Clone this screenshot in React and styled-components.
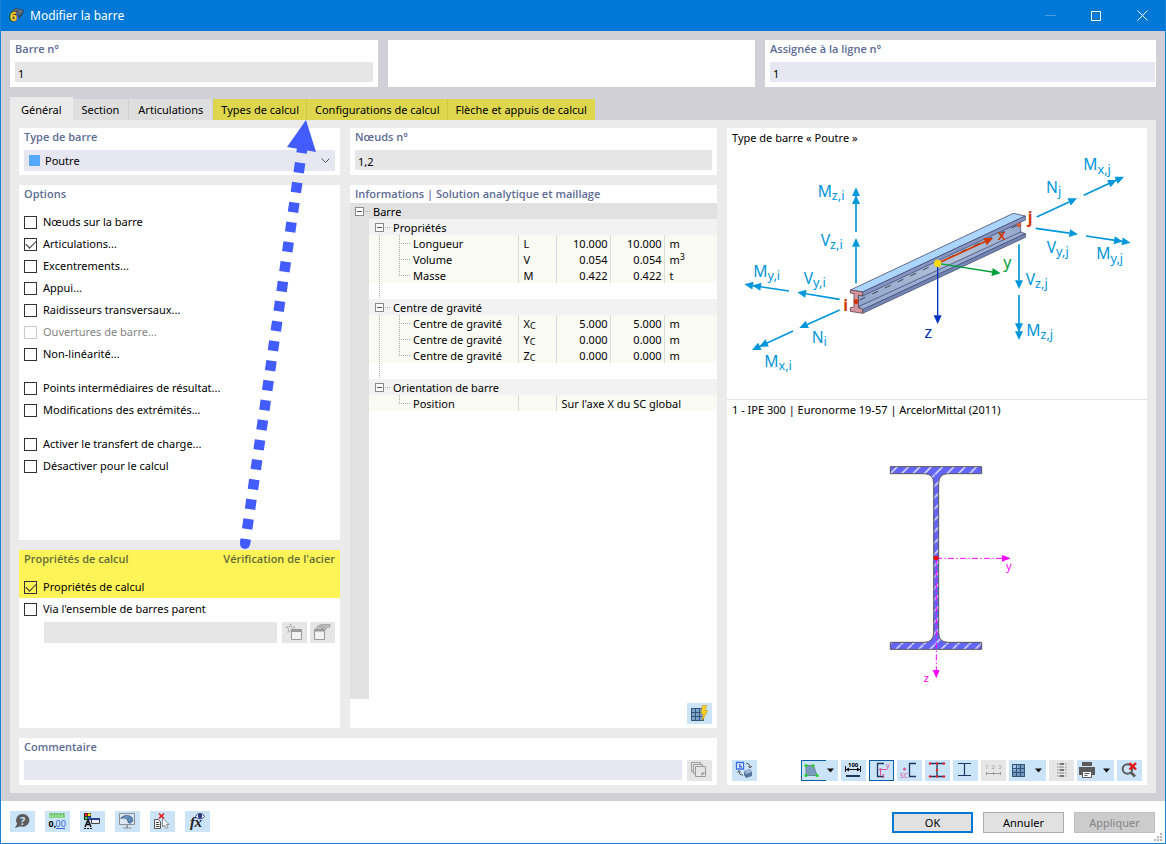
import React from "react";
import styled, {createGlobalStyle, css} from "styled-components";

const GlobalStyle = createGlobalStyle`
  * {
    box-sizing: border-box;
  }
  body {
    margin: 0;
    font-family: "Noto Sans", "Open Sans", sans-serif;
    font-size: 11px;
    line-height: 16px;
    color: #000;
  }
  button, input, select {
    font: inherit;
    color: inherit;
    margin: 0;
    padding: 0;
    border: 0;
    border-radius: 0;
  }
`;

/* ---------- window frame ---------- */

const Window = styled.div`
  min-height: 100vh;
  display: flex;
  flex-direction: column;
  border: 1px solid #1883d7;
  border-top: 0;
  background: #fff;
`;
const TitleBar = styled.header`
  height: 31px;
  display: flex;
  align-items: center;
  background: #0078d7;
  color: #fff;
  h1 {
    flex: 1;
    margin: 0 0 0 5px;
    font-size: 12px;
    font-weight: 400;
  }
  > svg {
    margin-left: 7px;
    overflow: visible;
  }
`;
const WindowButton = styled.button`
  width: 46px;
  height: 31px;
  background: none;
  svg {
    display: block;
    margin: auto;
  }
`;
const Body = styled.main`
  flex: 1;
  display: flex;
  flex-direction: column;
  padding: 9px 9px 8px;
  background: #d1d0d6;
`;

/* ---------- panels and fields ---------- */

const Panel = styled.section`
  display: flex;
  flex-direction: column;
  min-width: 0;
  background: #fff;
  ${(p) => p.$grow && "flex: 1;"}
  ${(p) => p.$padded && "min-height: 47px; padding: 0 5px 4px;"}
`;
const headingStyle = css`
  margin: 0;
  height: 22px;
  font-family: "Open Sans", "Noto Sans", sans-serif;
  font-size: 11px;
  font-weight: 600;
  line-height: 17px;
  color: #5c6b94;
  white-space: nowrap;
`;
const Heading = styled.h2`
  ${headingStyle}
`;
const FieldLabel = styled.label`
  ${headingStyle}
  display: block;
`;
const TextField = styled.input`
  display: block;
  width: 100%;
  min-width: 0;
  height: ${(p) => (p.$tall ? 21 : 20)}px;
  padding: 2px 3px 0;
  background: ${(p) => (p.$editable ? "#e7e7f2" : "#e6e6e6")};
`;
const TopRow = styled.div`
  display: grid;
  grid-template-columns: 368fr 367fr 391fr;
  gap: 10px;
  ${Panel}:last-child {
    padding-right: 1px;
  }
`;
const SelectBox = styled.div`
  height: 21px;
  display: flex;
  align-items: center;
  padding: 0 5px;
  background: #e7e7f2;
  select {
    flex: 1;
    height: 21px;
    margin-left: 5px;
    appearance: none;
    background: none;
  }
`;
const Swatch = styled.span`
  width: 11px;
  height: 11px;
  background: #55aaff;
`;

/* ---------- tabs ---------- */

const TabStrip = styled.nav`
  display: flex;
  align-items: flex-end;
  height: 23px;
  margin-top: 10px;
`;
const Tab = styled.button`
  height: ${(p) => (p.$active ? 23 : 21)}px;
  padding: ${(p) => (p.$active ? "2px 10px 0 11px" : "0 9px")};
  white-space: nowrap;
  border-right: 1px solid #d1d0d6;
  background: #dedede;
  ${(p) => p.$active && "background: #ebebeb; border-color: #ebebeb;"}
  ${(p) => p.$marked && "padding: 0 7px 0 8px; background: #ded74d; border-color: #d0c945;"}
  &:last-child {
    border-color: #ded74d;
  }
`;
const TabPage = styled.div`
  flex: 1;
  position: relative;
  display: grid;
  grid-template-columns: 321fr 367fr 420fr;
  grid-template-rows: 1fr auto;
  gap: 10px;
  padding: 8px 9px;
  background: #ebebeb;
`;
const Column = styled.div`
  display: flex;
  flex-direction: column;
  gap: 10px;
  min-width: 0;
`;
const CommentPanel = styled(Panel)`
  grid-column: 1 / 3;
  grid-row: 2;
`;
const CommentRow = styled.div`
  display: flex;
  gap: 5px;
`;
const PreviewPanel = styled(Panel)`
  grid-column: 3;
  grid-row: 1 / 3;
`;

/* ---------- check boxes ---------- */

const CheckList = styled.div`
  padding: ${(p) => (p.$first ? "4px 0 0" : "12px 0 0")};
`;
const CheckLabel = styled.label`
  display: flex;
  align-items: center;
  gap: 6px;
  height: 22px;
  color: ${(p) => (p.$disabled ? "#838383" : "#000")};
  white-space: nowrap;
`;
const CheckInput = styled.input`
  appearance: none;
  width: 13px;
  height: 13px;
  flex: none;
  display: grid;
  place-items: center;
  border: 1px solid #333;
  background: ${(p) => (p.$plain ? "transparent" : "#fff")};
  &:disabled {
    border-color: #ccc;
  }
  &:checked::before {
    content: "";
    width: 9px;
    height: 5px;
    margin-bottom: 3px;
    border: solid #333;
    border-width: 0 0 1px 1px;
    transform: rotate(-45deg);
  }
`;
const DesignPanel = styled(Panel)`
  min-height: 178px;
`;
const Marked = styled.div`
  height: 48px;
  padding: 0 5px;
  background: #fff457;
  ${Heading} {
    display: flex;
    justify-content: space-between;
    height: 26px;
    color: #5f6d38;
  }
`;
const SetBox = styled.div`
  padding: 0 5px;
`;
const SetRow = styled.div`
  display: flex;
  gap: 3px;
  padding: 2px 0 0 20px;
  ${TextField} {
    margin-right: 2px;
  }
`;

/* ---------- information tree ---------- */

const TreeHeading = styled(Heading)`
  height: 18px;
  padding-left: 5px;
`;
const TreeRoot = styled.div`
  display: flex;
  align-items: center;
  height: 16px;
  padding-left: 5px;
  background: #e1e1e1;
`;
const TreeBody = styled.div`
  flex: 1;
  border-left: 19px solid #e1e1e1;
`;
const Toggle = styled.button`
  width: 9px;
  height: 9px;
  display: grid;
  place-items: center;
  flex: none;
  border: 1px solid #8a8a8a;
  background: #fff;
  &::before {
    content: "";
    width: 5px;
    height: 1px;
    background: #555;
  }
`;
const Dots = styled.span`
  width: 5px;
  height: 1px;
  flex: none;
  margin: 0 3px 0 1px;
  background: repeating-linear-gradient(to right, #aaa 0 1px, transparent 1px 2px);
`;
const Table = styled.table`
  width: 100%;
  table-layout: fixed;
  border-collapse: collapse;
  tr {
    height: 16px;
  }
  td, th {
    height: 16px;
    padding: 0;
    font-weight: 400;
    text-align: left;
    white-space: nowrap;
  }
`;
const Col = styled.col`
  width: ${(p) => p.$width}px;
`;
const GroupRow = styled.tr`
  background: #f2f2f2;
`;
const DataRow = styled.tr`
  background: #f9faf4;
  td {
    padding: 1px 0 0 4px;
    line-height: 15px;
    border-left: 1px solid #dcdcdc;
  }
`;
const NumberCell = styled.td`
  && {
    padding: 1px 3px 0 0;
    text-align: right;
  }
`;
const Small = styled.span`
  display: inline-block;
  font-size: 9px;
  line-height: 8px;
  vertical-align: ${(p) => (p.$up ? "4px" : "-1px")};
`;
const NameBox = styled.div`
  display: flex;
  align-items: center;
  height: 16px;
  padding-left: ${(p) => (p.$group ? 6 : 10)}px;
`;
const Name = styled.span`
  padding-top: 2px;
`;
const Stem = styled.span`
  width: 20px;
  height: 16px;
  flex: none;
  ${(p) =>
    !p.$blank &&
    "background: repeating-linear-gradient(to bottom, #aaa 0 1px, transparent 1px 2px) 0 0 / 1px 16px no-repeat;"}
`;
const Elbow = styled.span`
  width: 14px;
  height: 16px;
  flex: none;
  background:
    repeating-linear-gradient(to bottom, #aaa 0 1px, transparent 1px 2px) 0 0 / 1px ${(p) => (p.$last ? 8 : 16)}px no-repeat,
    repeating-linear-gradient(to right, #aaa 0 1px, transparent 1px 2px) 0 8px / 11px 1px no-repeat;
`;
const PanelFoot = styled.div`
  display: flex;
  justify-content: flex-end;
  padding: 4px 5px;
`;

/* ---------- preview ---------- */

const Caption = styled.div`
  height: 20px;
  padding: 2px 5px 0;
`;
const Preview = styled.div`
  border-bottom: ${(p) => (p.$line ? "1px solid #e4e4e4" : "0")};
  svg {
    display: block;
    width: 100%;
    height: auto;
  }
`;
const ToolRow = styled.div`
  display: flex;
  justify-content: space-between;
  margin-top: auto;
  padding: 0 5px 4px;
`;
const ToolGroup = styled.div`
  display: flex;
  gap: ${(p) => (p.$wide ? 10 : 3)}px;
`;
const ToolButton = styled.button`
  width: ${(p) => (p.$split ? 37 : 25)}px;
  height: 21px;
  flex: none;
  background: #cce4f7;
  box-shadow: ${(p) => (p.$active ? "inset 0 0 0 1px #0a5ca8" : "none")};
  &:disabled {
    background: #e6e6e6;
  }
  svg {
    display: block;
  }
`;

/* ---------- footer ---------- */

const Footer = styled.footer`
  display: flex;
  justify-content: space-between;
  padding: 10px 10px 10px 9px;
  background: #fff;
`;
const DialogButton = styled.button`
  width: 81px;
  height: 21px;
  margin-top: 1px;
  border: ${(p) => (p.$primary ? "2px solid #0078d7" : "1px solid #adadad")};
  background: #e1e1e1;
  &:disabled {
    border-color: #bfbfbf;
    background: #ccc;
    color: #838383;
  }
`;
const Grip = styled.svg`
  position: absolute;
  right: 4px;
  bottom: 3px;
`;
const PointerArrow = styled.svg`
  position: absolute;
  left: 220px;
  top: 0;
  pointer-events: none;
`;

/* ---------- icons ---------- */

const NAVY = "#1f3566";
const GREY = "#9a9a9a";

const icons = {
  help: (
    <>
      <path d="M12.700 3a6.600 6.300 0 1 1-2.200 12.200L5 17l2.200-4.200A6.600 6.300 0 0 1 12.700 3z" fill="#5c5c5c" />
      <text x="10" y="13.500" fontSize="11" fontWeight="700" fill="#cce4f7">?</text>
    </>
  ),
  decimals: (
    <>
      <path d="M4 2h16v5H4z" fill="#8ed88b" />
      <path d="M6.500 2v2M9.500 2v2M12.500 2v2M15.500 2v2M18.500 2v2" stroke="#5aa85a" />
      <text x="3.500" y="16" fontSize="9" fontWeight="700">0,</text>
      <text x="10.500" y="16" fontSize="9" fill="#3465d8">00</text>
      <path d="M11 17.500h9" stroke="#3465d8" />
    </>
  ),
  display: (
    <>
      <path d="M4 2h7v7H4z" fill="#222" />
      <path d="M5 2.500h2.500v2.500H5z" fill="#f22" />
      <path d="M8 2.500h2.500v2.500H8z" fill="#ffe600" />
      <path d="M5 5.800h2.500v2.500H5z" fill="#3c4" />
      <path d="M8 5.800h2.500v2.500H8z" fill="#36f" />
      <path d="M5 16l3-7 3 7M6.500 13.500h3" stroke="#111" strokeWidth="1.500" fill="none" />
      <path d="M4 17.500h8" stroke="#111" strokeDasharray="2 1" />
      <path d="M11.500 7.500h8v5h-8z" fill="#eef" stroke="#444" />
      <path d="M11 7h9v2h-9z" fill="#26408f" />
    </>
  ),
  monitor: (
    <>
      <path d="M4.500 2.500h15v11h-15z" fill="#dbe8f3" stroke="#8f8f8f" />
      <path d="M11.500 14h1.500v2.500h-1.500zM8 16.500h8.500v1H8z" fill="#8f8f8f" />
      <path d="M5.500 7.500c3-4 9-4.500 12-.5l.5 3-3 2.500-2-1c0-4-3-5-7.500-4z" fill="#4d77a8" stroke="#3a5a80" strokeWidth=".5" />
      <path d="M8 7c3-1 6 0 7 4M10.500 5.500c3 0 5 1 6 4" stroke="#9dbbd8" strokeWidth=".6" fill="none" />
    </>
  ),
  unselect: (
    <>
      <path d="M9 2.500l5 5M14 2.500l-5 5" stroke="#e5151b" strokeWidth="1.600" />
      <path d="M4.500 8.500h4l2 2.500v6.500h-6z" fill="#fff" stroke="#555" />
      <path d="M6 11.500h3M6 13.500h3.500M6 15.500h3.500" stroke="#444" />
      <path d="M12.500 7v9l2-2 1.500 3.500 1.800-1-1.500-3H19z" fill="#fff" stroke="#777" strokeWidth=".8" />
    </>
  ),
  fx: (
    <>
      <text x="5" y="16" fontFamily="Liberation Serif, serif" fontStyle="italic" fontWeight="700" fontSize="15" fill="#222">f</text>
      <text x="9.500" y="16" fontFamily="Liberation Serif, serif" fontStyle="italic" fontWeight="700" fontSize="15" fill="#222">x</text>
      <path d="M10.500 5.500c2-4 7-4 9 0-2 3-7 3-9 0z" fill="#fff" stroke="#27357a" />
      <circle cx="15" cy="5" r="2.200" fill="#27357a" />
    </>
  ),
  swap: (
    <>
      <path d="M4.500 2.500h7v6.500h-7z" fill="#e8f1fd" stroke="#3d6be6" strokeWidth="1.300" />
      <path d="M7 4h1.500v2H10v1.500H7z" fill="#3d6be6" />
      <path d="M14 3.500c3 0 4 1 4 4M16.500 6l1.500 2 2-2M7 11c0 3 1 4 4 4M5.500 12.500L7 10.500l1.800 2" stroke="#555" fill="none" />
      <path d="M12 11l6-2 2 3v4l-6 2-2-3z" fill="#55749e" />
      <path d="M12 11l6-2 2 3-6 2z" fill="#9ab6d6" />
    </>
  ),
  shape: (
    <>
      <path d="M25 .5H.5v20H25" stroke="#0a5ca8" fill="none" />
      <path d="M5 5.500h7.500l3.500 10H5z" fill="#7c9cbc" stroke="#6d86a0" />
      {[[5, 5.500], [12, 5.500], [16, 15.500], [5, 15.500]].map(([x, y]) => (
        <circle key={x + "-" + y} cx={x} cy={y} r="1.600" fill="#2bd02b" />
      ))}
    </>
  ),
  dimension: (
    <>
      <text x="7" y="7" fontSize="6" fontWeight="700">100</text>
      <path d="M4.500 6v6M19.500 6v6M5 9.500h14" stroke="#111" />
      <path d="M5 9.500l3-2v4zM19 9.500l-3-2v4z" />
      <path d="M5 15h14v2H5z" fill={NAVY} />
    </>
  ),
  axes: (
    <>
      <path d="M15 3.500H8.500v13H15" stroke={NAVY} strokeWidth="1.300" fill="none" />
      <path d="M11.500 9.500h6M11.500 9.500v6" stroke="#d8569b" />
      <circle cx="11.500" cy="9.500" r="1.300" fill="#d8569b" />
      <text x="17" y="7.500" fontSize="7" fill="#d8569b">y</text>
      <text x="12.500" y="17.500" fontSize="7" fill="#d8569b">z</text>
    </>
  ),
  shear: (
    <>
      <path d="M19 3.500h-6.500v13H19" stroke={NAVY} strokeWidth="1.300" fill="none" />
      <circle cx="7.500" cy="9" r="1.500" fill="#d8569b" />
      <text x="3" y="18" fontSize="7" fill="#d8569b">SC</text>
    </>
  ),
  points: (
    <>
      <path d="M5 3.500h14M5 16.500h14M12 3.500v13" stroke={NAVY} strokeWidth="1.300" />
      {[[5, 3.500], [12, 3.500], [19, 3.500], [12, 10], [5, 16.500], [12, 16.500], [19, 16.500]].map(([x, y]) => (
        <circle key={x + "-" + y} cx={x} cy={y} r="1.200" fill="#f02020" />
      ))}
    </>
  ),
  profile: <path d="M5 3.500h13M5 15.500h13M11.500 3.500v12" stroke={NAVY} strokeWidth="1.200" />,
  numbers: (
    <>
      <text x="4" y="9" fontSize="6" fill={GREY}>1</text>
      <text x="10.500" y="9" fontSize="6" fill={GREY}>2</text>
      <text x="17" y="9" fontSize="6" fill={GREY}>3</text>
      <path d="M5 13.500h15M5.500 12v3M12.500 12v3M19.500 12v3" stroke={GREY} />
    </>
  ),
  grid: (
    <>
      <path d="M3 4h13v13H3z" fill="#6f97c2" />
      <path d="M3 4h6v6H3z" fill="#a6c6e6" />
      <path d="M3.500 4v13M7.500 4v13M11.500 4v13M15.500 4v13M3 4.500h13M3 8.500h13M3 12.500h13M3 16.500h13" stroke="#335577" />
    </>
  ),
  scale: (
    <>
      {[3, 6, 9, 12, 15].map((y, i) => (
        <g key={y}>
          <rect x="11" y={y} width="4" height="2" fill={i % 2 ? "#b5b5b5" : "#777"} />
          <path d={`M8 ${y + 1}h3M16 ${y + 1}h2`} stroke="#888" strokeDasharray="1.500 .5" />
        </g>
      ))}
    </>
  ),
  printer: (
    <>
      <path d="M5 2h10v4H5zM2 7h16v8h-3v-3H5v3H2z" fill="#5a5a5a" />
      <path d="M5.500 11.500h9v6h-9z" fill="#fff" stroke="#5a5a5a" />
      <path d="M7.500 13.500h5M7.500 15.500h3" stroke="#5a5a5a" />
    </>
  ),
  resetZoom: (
    <>
      <circle cx="10.500" cy="9" r="4.800" stroke="#5a5a5a" strokeWidth="2" fill="none" />
      <path d="M14 12.500l4 4" stroke="#5a5a5a" strokeWidth="2.600" />
      <path d="M12.500 3l6.500 6.500M19 3l-6.500 6.500" stroke="#e5151b" strokeWidth="2.400" />
    </>
  ),
  newSet: (
    <>
      <path d="M8.500 2l1 3h3.500l-2.700 2 1 3.500-2.800-2-2.700 2 1-3.500L4 5h3.500z" fill="none" stroke={GREY} strokeDasharray="1.500 .7" strokeWidth=".9" />
      <path d="M9.500 7.500h10v10h-10z" fill="#f2f2f2" stroke={GREY} />
      <path d="M9 7h11v3H9z" fill={GREY} />
    </>
  ),
  editSet: (
    <>
      <path d="M4.500 7.500h10v10h-10z" fill="#f2f2f2" stroke={GREY} />
      <path d="M4 7h11v2.500H4z" fill={GREY} />
      <path d="M6 6.500c1-3 4-4 7-4h7v2.500l-3 .5-2 3-2-2-3 1.500z" fill="#c4c4c4" stroke="#8d8d8d" strokeWidth=".6" />
      <path d="M9 5l4-1M11 7l4-2M16 3v2" stroke="#8d8d8d" strokeWidth=".7" />
    </>
  ),
  library: (
    <>
      <path d="M4.500 2.500h9v9h-9z" fill="#e6e6e6" stroke={GREY} />
      <path d="M6.500 4.500h9v9h-9z" fill="#e6e6e6" stroke={GREY} />
      <path d="M8.500 6.500h10v10h-10z" fill="#e6e6e6" stroke={GREY} />
      <path d="M14.500 16v-3.500h4z" fill={GREY} />
    </>
  ),
  mesh: (
    <>
      <path d="M4 5h13v13H4z" fill="#7fa5cc" />
      <path d="M4.500 5v13M8.500 5v13M12.500 5v13M16.500 5v13M4 5.500h13M4 9.500h13M4 13.500h13M4 17.500h13" stroke="#335577" />
      <path d="M15.500 2.500h4l-1.500 5h2.500l-5 10 .5-7h-2z" fill="#ffd52e" stroke="#c79a10" strokeWidth=".7" />
    </>
  ),
};

const Icon = ({name, split}) => (
  <svg width={split ? 37 : 25} height="21" viewBox={`0 0 ${split ? 37 : 25} 21`} aria-hidden="true">
    {icons[name]}
    {split && <path d="M26 8.500h7l-3.500 4z" fill="#111" />}
  </svg>
);

const Tool = ({icon, title, split, active, disabled}) => (
  <ToolButton type="button" aria-label={title} $split={split} $active={active} disabled={disabled}>
    <Icon name={icon} split={split} />
  </ToolButton>
);

/* ---------- drawings ---------- */

const Arrow = ({from, to, color = "#0096db", double, width = 5, head = 26}) => {
  const [x1, y1] = from;
  const [x2, y2] = to;
  const angle = (Math.atan2(y2 - y1, x2 - x1) * 180) / Math.PI;
  const length = Math.hypot(x2 - x1, y2 - y1);
  return (
    <g transform={`translate(${x1} ${y1}) rotate(${angle})`} fill={color}>
      <path d={`M0 0H${length - head}`} stroke={color} strokeWidth={width} />
      <path d={`M${length} 0l${-head} -12v24z`} />
      {double && <path d={`M${length - 24} 0l${-head} -12v24z`} />}
    </g>
  );
};

const forces = [
  {from: [393, 336], to: [393, 202], double: true, name: "M", sub: "z,i", at: [278, 231]},
  {from: [393, 490], to: [393, 354], name: "V", sub: "z,i", at: [287, 377]},
  {from: [192, 513], to: [58, 493], double: true, name: "M", sub: "y,i", at: [85, 471]},
  {from: [344, 538], to: [217, 517], name: "V", sub: "y,i", at: [236, 492]},
  {from: [344, 570], to: [223, 624], name: "N", sub: "i", at: [260, 668]},
  {from: [204, 633], to: [81, 690], double: true, name: "M", sub: "x,i", at: [118, 740]},
  {from: [935, 291], to: [1056, 235], name: "N", sub: "j", at: [963, 218]},
  {from: [1076, 226], to: [1197, 170], double: true, name: "M", sub: "x,j", at: [1075, 151]},
  {from: [932, 325], to: [1059, 343], name: "V", sub: "y,j", at: [965, 398]},
  {from: [1083, 348], to: [1217, 368], double: true, name: "M", sub: "y,j", at: [1114, 418]},
  {from: [882, 373], to: [882, 507], name: "V", sub: "z,j", at: [902, 495]},
  {from: [882, 525], to: [882, 660], double: true, name: "M", sub: "z,j", at: [904, 647]},
];

const BeamDrawing = () => (
  <svg viewBox="6 84 1260 753" role="img" aria-label="Poutre">
    <defs>
      <linearGradient id="web" x1="0" y1="1" x2="1" y2="0">
        <stop offset="0" stopColor="#8fa5cc" />
        <stop offset="0.6" stopColor="#b4c3d8" />
        <stop offset="1" stopColor="#8fa5cc" />
      </linearGradient>
    </defs>
    <g stroke="#4a5272" strokeWidth="2.500" strokeLinejoin="round">
      <path d="M400 522L887 300V344L400 566z" fill="url(#web)" />
      <path d="M400 560L887 336L901 341L413 569z" fill="#9aabd4" />
      <path d="M413 569L901 341V352L413 580z" fill="#7486b8" />
      <path d="M376 510L865 280L901 288L413 516z" fill="#acd5fd" />
      <path d="M413 516L901 288V300L413 528z" fill="#8495c6" />
      <path d="M376 510l37 6v12l-13-3v38l13 5v12l-37-6v-11l11-2v-40l-11-2z" fill="#d3969f" stroke="#5f4352" />
    </g>
    <path d="M404 540L876 316" stroke="#3c4358" strokeWidth="3" strokeDasharray="19 23" />
    <circle cx="393" cy="545" r="7" fill="#d03000" />
    <circle cx="882" cy="315" r="7" fill="#d85a3c" />
    <Arrow from={[638, 430]} to={[804, 354]} color="#d03800" head={26} />
    <Arrow from={[638, 430]} to={[827, 460]} color="#00a038" width={4} />
    <Arrow from={[638, 430]} to={[638, 612]} color="#0030c0" width={4} />
    <circle cx="638" cy="430" r="11" fill="#ffd800" />
    {forces.map(({name, sub, at, ...arrow}) => (
      <g key={name + sub}>
        <Arrow {...arrow} />
        <text x={at[0]} y={at[1]} fontSize="47" fill="#0096db">
          {name}
          <tspan dy="10" fontSize="38">{sub}</tspan>
        </text>
      </g>
    ))}
    <g fontSize="48">
      <text x="818" y="360" fill="#d03800" fontWeight="600" fontSize="42">x</text>
      <text x="835" y="444" fill="#00a038">y</text>
      <text x="598" y="655" fill="#0030c0" fontSize="50">z</text>
      <text x="355" y="574" fill="#d03800" fontWeight="700">i</text>
      <text x="908" y="310" fill="#d03800" fontWeight="700">j</text>
    </g>
  </svg>
);

const profilePath =
  "M91 80H365V101H264Q236 101 236 130V578Q236 607 264 607H365V628H91V607H192Q221 607 221 578V130Q221 101 192 101H91z";

const SectionDrawing = () => (
  <svg viewBox="-399 -60 1260 1005" role="img" aria-label="IPE 300">
    <defs>
      <pattern id="hatch" width="34" height="34" patternUnits="userSpaceOnUse" x="20" y="2">
        <rect width="34" height="34" fill="#6464ff" />
        <path d="M-4 38L38 -4" stroke="#f2f2ff" strokeWidth="4" />
      </pattern>
    </defs>
    <path d={profilePath} fill="url(#hatch)" stroke="#555" strokeWidth="3" />
    <g stroke="#f0f" strokeWidth="3" strokeDasharray="18 7 4 7">
      <path d="M228 355H428" />
      <path d="M229 355V692" />
    </g>
    <path d="M426 345v20l26-10zM218 690h21l-10 25z" fill="#f0f" />
    <circle cx="228" cy="354" r="7" fill="#f00" />
    <text x="438" y="391" fontSize="33" fill="#f0f">y</text>
    <text x="191" y="725" fontSize="33" fill="#f0f">z</text>
  </svg>
);

/* ---------- data ---------- */

const optionGroups = [
  [
    {label: "Nœuds sur la barre"},
    {label: "Articulations...", checked: true},
    {label: "Excentrements..."},
    {label: "Appui..."},
    {label: "Raidisseurs transversaux..."},
    {label: "Ouvertures de barre...", disabled: true},
    {label: "Non-linéarité..."},
  ],
  [{label: "Points intermédiaires de résultat..."}, {label: "Modifications des extrémités..."}],
  [{label: "Activer le transfert de charge..."}, {label: "Désactiver pour le calcul"}],
];

const treeGroups = [
  {
    title: "Propriétés",
    rows: [
      {name: "Longueur", symbol: "L", value: "10.000", unit: "m"},
      {name: "Volume", symbol: "V", value: "0.054", unit: "m", power: "3"},
      {name: "Masse", symbol: "M", value: "0.422", unit: "t"},
    ],
  },
  {
    title: "Centre de gravité",
    rows: [
      {name: "Centre de gravité", symbol: "X", index: "C", value: "5.000", unit: "m"},
      {name: "Centre de gravité", symbol: "Y", index: "C", value: "0.000", unit: "m"},
      {name: "Centre de gravité", symbol: "Z", index: "C", value: "0.000", unit: "m"},
    ],
  },
  {title: "Orientation de barre", rows: [{name: "Position", text: "Sur l'axe X du SC global"}]},
];

const tabs = [
  {label: "Général", active: true},
  {label: "Section"},
  {label: "Articulations"},
  {label: "Types de calcul", marked: true},
  {label: "Configurations de calcul", marked: true},
  {label: "Flèche et appuis de calcul", marked: true},
];

const CheckRow = ({label, checked, disabled, plain}) => (
  <CheckLabel $disabled={disabled}>
    <CheckInput type="checkbox" defaultChecked={checked} disabled={disabled} $plain={plain} />
    {label}
  </CheckLabel>
);

const InfoTable = () => (
  <Table>
    <colgroup>
      <col />
      <Col $width={38} />
      <Col $width={54} />
      <Col $width={54} />
      <Col $width={52} />
    </colgroup>
    {treeGroups.map((group, g) => {
      const lastGroup = g === treeGroups.length - 1;
      return (
        <tbody key={group.title}>
          <GroupRow>
            <th colSpan={5}>
              <NameBox $group>
                <Toggle type="button" aria-label={group.title} />
                <Dots />
                <Name>{group.title}</Name>
              </NameBox>
            </th>
          </GroupRow>
          {group.rows.map((row, i) => (
            <DataRow key={i}>
              <th>
                <NameBox>
                  <Stem $blank={lastGroup} />
                  <Elbow $last={i === group.rows.length - 1} />
                  <Name>{row.name}</Name>
                </NameBox>
              </th>
              <td>
                {row.symbol}
                {row.index && <Small>{row.index}</Small>}
              </td>
              {row.text ? (
                <td colSpan={3}>{row.text}</td>
              ) : (
                <>
                  <NumberCell>{row.value}</NumberCell>
                  <NumberCell>{row.value}</NumberCell>
                  <td>
                    {row.unit}
                    {row.power && <Small $up>{row.power}</Small>}
                  </td>
                </>
              )}
            </DataRow>
          ))}
          {!lastGroup && (
            <tr>
              <td colSpan={5}>
                <NameBox>
                  <Stem />
                </NameBox>
              </td>
            </tr>
          )}
        </tbody>
      );
    })}
  </Table>
);

const App = () => {
  return (
    <Window>
      <GlobalStyle />
      <TitleBar>
        <svg width="17" height="17" viewBox="0 0 17 17" aria-hidden="true">
          <path d="M3 4l5-3 8 2-1 4-4 5-2-6z" fill="#3a4a5c" />
          <path d="M5 4l4-1.500 5 2M9 6l5-2M10 8l4-3" stroke="#7e93a8" strokeWidth=".8" fill="none" />
          <text x="2" y="14" fontSize="12" fontWeight="700" fill="#ffd23c" stroke="#5a4a10" strokeWidth="1.500" paintOrder="stroke">6</text>
        </svg>
        <h1>Modifier la barre</h1>
        <WindowButton type="button" aria-label="Réduire">
          <svg width="11" height="11"><path d="M0 5.500h11" stroke="#4a9fe3" /></svg>
        </WindowButton>
        <WindowButton type="button" aria-label="Agrandir">
          <svg width="10" height="10"><path d="M.5.500h9v9h-9z" stroke="#fff" fill="none" /></svg>
        </WindowButton>
        <WindowButton type="button" aria-label="Fermer">
          <svg width="11" height="11"><path d="M.5.500l10 10M10.500.500l-10 10" stroke="#fff" fill="none" /></svg>
        </WindowButton>
      </TitleBar>

      <Body>
        <TopRow>
          <Panel $padded>
            <FieldLabel htmlFor="member">Barre n°</FieldLabel>
            <TextField id="member" readOnly defaultValue="1" />
          </Panel>
          <Panel />
          <Panel $padded>
            <FieldLabel htmlFor="line">Assignée à la ligne n°</FieldLabel>
            <TextField id="line" $editable defaultValue="1" />
          </Panel>
        </TopRow>

        <TabStrip>
          {tabs.map(({label, active, marked}) => (
            <Tab key={label} type="button" $active={active} $marked={marked}>
              {label}
            </Tab>
          ))}
        </TabStrip>

        <TabPage>
          <Column>
            <Panel $padded>
              <FieldLabel htmlFor="type">Type de barre</FieldLabel>
              <SelectBox>
                <Swatch />
                <select id="type">
                  <option>Poutre</option>
                </select>
                <svg width="9" height="6"><path d="M.5.500l4 4 4-4" stroke="#555" fill="none" /></svg>
              </SelectBox>
            </Panel>
            <Panel $padded $grow>
              <Heading>Options</Heading>
              {optionGroups.map((group, i) => (
                <CheckList key={i} $first={i === 0}>
                  {group.map((option) => (
                    <CheckRow key={option.label} {...option} />
                  ))}
                </CheckList>
              ))}
            </Panel>
            <DesignPanel>
              <Marked>
                <Heading>
                  <span>Propriétés de calcul</span>
                  <span>Vérification de l'acier</span>
                </Heading>
                <CheckRow label="Propriétés de calcul" checked plain />
              </Marked>
              <SetBox>
                <CheckRow label="Via l'ensemble de barres parent" />
                <SetRow>
                  <TextField $tall disabled aria-label="Ensemble de barres" />
                  <Tool icon="newSet" title="Nouveau" disabled />
                  <Tool icon="editSet" title="Modifier" disabled />
                </SetRow>
              </SetBox>
            </DesignPanel>
          </Column>

          <Column>
            <Panel $padded>
              <FieldLabel htmlFor="nodes">Nœuds n°</FieldLabel>
              <TextField id="nodes" readOnly defaultValue="1,2" />
            </Panel>
            <Panel $grow>
              <TreeHeading>Informations | Solution analytique et maillage</TreeHeading>
              <TreeRoot>
                <Toggle type="button" aria-label="Barre" />
                <Dots />
                <Name>Barre</Name>
              </TreeRoot>
              <TreeBody>
                <InfoTable />
              </TreeBody>
              <PanelFoot>
                <Tool icon="mesh" title="Mailler" />
              </PanelFoot>
            </Panel>
          </Column>

          <CommentPanel $padded>
            <FieldLabel htmlFor="comment">Commentaire</FieldLabel>
            <CommentRow>
              <TextField id="comment" $editable />
              <Tool icon="library" title="Commentaires" disabled />
            </CommentRow>
          </CommentPanel>

          <PreviewPanel>
            <Preview $line>
              <Caption>Type de barre « Poutre »</Caption>
              <BeamDrawing />
            </Preview>
            <Preview>
              <Caption>1 - IPE 300 | Euronorme 19-57 | ArcelorMittal (2011)</Caption>
              <SectionDrawing />
            </Preview>
            <ToolRow>
              <Tool icon="swap" title="Changer de vue" />
              <ToolGroup>
                <Tool icon="shape" title="Forme" split />
                <Tool icon="dimension" title="Cotes" />
                <Tool icon="axes" title="Axes" active />
                <Tool icon="shear" title="Centre de cisaillement" />
                <Tool icon="points" title="Points" />
                <Tool icon="profile" title="Profil" />
                <Tool icon="numbers" title="Numéros" disabled />
                <Tool icon="grid" title="Grille" split />
                <Tool icon="scale" title="Échelle" disabled />
                <Tool icon="printer" title="Imprimer" split />
                <Tool icon="resetZoom" title="Vue entière" />
              </ToolGroup>
            </ToolRow>
          </PreviewPanel>

          <PointerArrow width="100" height="440" viewBox="230 120 100 440" aria-hidden="true">
            <path d="M303 143L245 544" stroke="#425cff" strokeWidth="10.500" strokeDasharray="10 10" />
            <circle cx="245" cy="544" r="5" fill="#425cff" />
            <path d="M306 120l-19 27 29 5z" fill="#425cff" />
          </PointerArrow>
        </TabPage>
      </Body>

      <Footer>
        <ToolGroup $wide>
          <Tool icon="help" title="Aide" />
          <Tool icon="decimals" title="Unités" />
          <Tool icon="display" title="Affichage" />
          <Tool icon="monitor" title="Vue" />
          <Tool icon="unselect" title="Désélectionner" />
          <Tool icon="fx" title="Formules" />
        </ToolGroup>
        <ToolGroup $wide>
          <DialogButton type="button" $primary>OK</DialogButton>
          <DialogButton type="button">Annuler</DialogButton>
          <DialogButton type="button" disabled>Appliquer</DialogButton>
        </ToolGroup>
        <Grip width="8" height="8" aria-hidden="true">
          <path d="M6 0h2v2H6zM3 3h2v2H3zM6 3h2v2H6zM0 6h2v2H0zM3 6h2v2H3zM6 6h2v2H6z" fill="#b5b5b5" />
        </Grip>
      </Footer>
    </Window>
  );
};

export default App;
